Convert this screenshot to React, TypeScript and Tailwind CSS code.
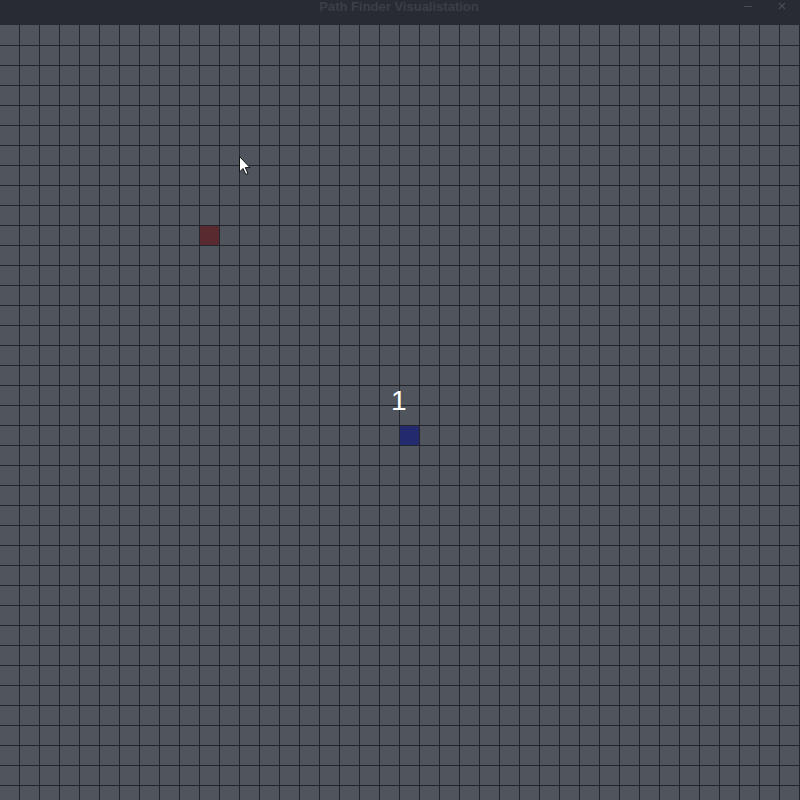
import React from 'react';

const COLS = 40;
const ROWS = 39;

// cells that have been placed on the board: [col, row, kind]
const marked: Record<string, 'start' | 'end'> = {
  '10-10': 'start',
  '20-20': 'end',
};

function Cell({ col, row }: { col: number; row: number }) {
  const kind = marked[`${col}-${row}`];
  if (kind === 'start') return <div className="bg-[#5a2a31]" />;
  if (kind === 'end') return <div className="bg-[#232b6e]" />;
  return <div className="bg-[#50545d]" />;
}

function Cursor() {
  return (
    <svg width="14" height="22" viewBox="0 0 14 22" className="absolute left-[238px] top-[155px]">
      <path d="M1.5 1.5 L1.5 17 L5 13.5 L7.8 19.5 L10 18.5 L7.3 12.6 L12 12.6 Z" fill="#ffffff" stroke="#111111" strokeWidth="1" strokeLinejoin="round" />
    </svg>
  );
}

export default function App() {
  const cells = [];
  for (let r = 0; r < ROWS; r++) {
    for (let c = 0; c < COLS; c++) {
      cells.push(<Cell key={`${c}-${r}`} col={c} row={r} />);
    }
  }

  return (
    <div className="w-[800px] h-[800px] overflow-hidden flex flex-col bg-[#22252c] relative font-['Liberation_Sans',sans-serif]">
      <header className="h-[25px] shrink-0 bg-[#282b33] flex items-start justify-center relative">
        <span className="text-[13px] font-bold leading-[14px] text-[#3b3f47] ml-[-2px]">Path Finder Visualistation</span>
        <div className="absolute right-[14px] top-0 flex items-start gap-[26px]">
          <span className="block w-[8px] h-px bg-[#474b53] mt-[6px]" />
          <svg width="8" height="8" viewBox="0 0 8 8" className="mt-[2px]">
            <path d="M1 1 L7 7 M7 1 L1 7" stroke="#474b53" strokeWidth="1.2" />
          </svg>
        </div>
      </header>
      <main className="grid grid-cols-[repeat(40,19px)] grid-rows-[20px_repeat(38,19px)] gap-px h-[775px] overflow-hidden">
        {cells}
      </main>
      <span className="absolute left-[391px] top-[384px] text-[28px] leading-[34px] text-white">1</span>
      <Cursor />
    </div>
  );
}
